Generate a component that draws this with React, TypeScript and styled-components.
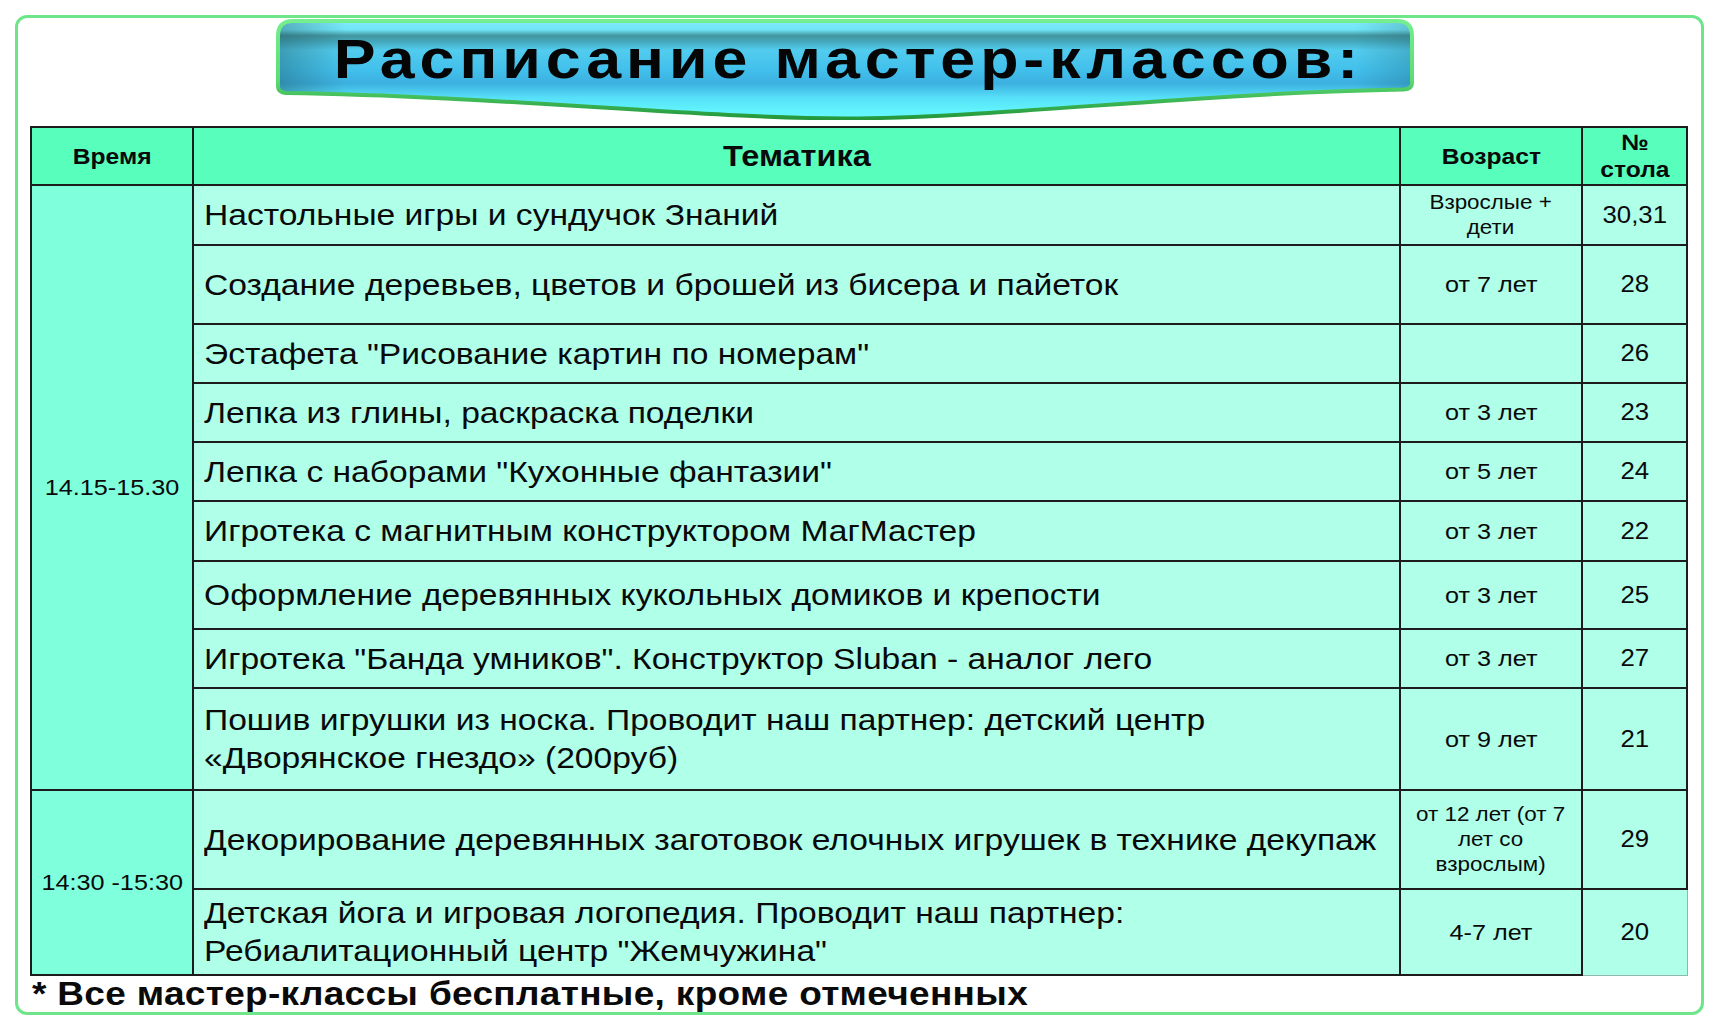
import { Fragment } from "react";
import type { ReactNode } from "react";
import styled, { createGlobalStyle } from "styled-components";

const GlobalStyle = createGlobalStyle`
  html, body {
    margin: 0;
    padding: 0;
    background: #ffffff;
  }
  body {
    font-family: "Liberation Sans", Arial, sans-serif;
    color: #0a0a0a;
  }
`;

// the source picture is stretched sideways, text is widened to match
const Stretch = styled.span<{ $origin?: string }>`
  display: inline-block;
  transform: scaleX(1.12);
  transform-origin: ${p => p.$origin || "center"};
`;

const Page = styled.div`
  padding: 15px 0 0 15px;
`;

const Frame = styled.div`
  box-sizing: border-box;
  width: 1689px;
  height: 1000px;
  border: 3px solid #6fe58b;
  border-radius: 12px;
  padding: 1px 15px 0 12px;
  display: flex;
  flex-direction: column;
`;

const Banner = styled.div`
  position: relative;
  width: 1138px;
  height: 101px;
  margin-left: 246px;
  display: flex;
  justify-content: center;
`;

const BannerShape = styled.svg`
  position: absolute;
  left: 0;
  top: 0;
`;

const Title = styled.h1`
  position: relative;
  margin: 0 0 0 6px;
  padding-top: 12px;
  font-size: 56px;
  line-height: 56px;
  font-weight: 700;
  letter-spacing: 4.4px;
  color: #050505;
`;

const Table = styled.table`
  width: 1656px;
  margin-top: 7px;
  border-collapse: collapse;
  table-layout: fixed;
`;

const Row = styled.tr<{ $h: number }>`
  height: ${p => p.$h}px;
`;

const HeadCell = styled.th<{ $size: number }>`
  background: #58ffbc;
  border: 2px solid #1c1c1c;
  padding: 0;
  font-size: ${p => p.$size}px;
  font-weight: 700;
  line-height: 27px;
  text-align: center;
  vertical-align: middle;
`;

const TimeCell = styled.td`
  background: #80ffdc;
  border: 2px solid #1c1c1c;
  padding: 0;
  font-size: 22.5px;
  text-align: center;
  vertical-align: middle;
`;

const TopicCell = styled.td`
  background: #b0ffe9;
  border: 2px solid #1c1c1c;
  padding: 0 10px;
  font-size: 30px;
  line-height: 38px;
  text-align: left;
  vertical-align: middle;
  white-space: nowrap;
`;

const AgeCell = styled.td<{ $small?: boolean }>`
  background: #b0ffe9;
  border: 2px solid #1c1c1c;
  padding: 0;
  font-size: ${p => (p.$small ? 20 : 22.5)}px;
  line-height: 25px;
  text-align: center;
  vertical-align: middle;
`;

const NumCell = styled.td<{ $open?: boolean }>`
  background: #b0ffe9;
  border: 2px solid #1c1c1c;
  ${p => p.$open && "border-right: 1px solid #8fb8ad; border-bottom: 1px solid #8fb8ad;"}
  padding: 0;
  font-size: 23px;
  text-align: center;
  vertical-align: middle;
`;

const Note = styled.div`
  margin-left: 2px;
  font-size: 33px;
  line-height: 36px;
  font-weight: 700;
  letter-spacing: 0.3px;
  white-space: nowrap;
`;

type Item = {
  h: number;
  topic: ReactNode;
  age: ReactNode;
  small?: boolean;
  num: string;
};

const first: Item[] = [
  { h: 60, topic: "Настольные игры и сундучок Знаний", age: <>Взрослые +<br />дети</>, small: true, num: "30,31" },
  { h: 79, topic: "Создание деревьев, цветов и брошей из бисера и пайеток", age: "от 7 лет", num: "28" },
  { h: 59, topic: "Эстафета \"Рисование картин по номерам\"", age: "", num: "26" },
  { h: 59, topic: "Лепка из глины, раскраска поделки", age: "от 3 лет", num: "23" },
  { h: 59, topic: "Лепка с наборами \"Кухонные фантазии\"", age: "от 5 лет", num: "24" },
  { h: 60, topic: "Игротека с магнитным конструктором МагМастер", age: "от 3 лет", num: "22" },
  { h: 68, topic: "Оформление деревянных кукольных домиков и крепости", age: "от 3 лет", num: "25" },
  { h: 59, topic: "Игротека \"Банда умников\". Конструктор Sluban - аналог лего", age: "от 3 лет", num: "27" },
  {
    h: 102,
    topic: <>Пошив игрушки из носка. Проводит наш партнер: детский центр<br />«Дворянское гнездо» (200руб)</>,
    age: "от 9 лет",
    num: "21",
  },
];

const second: Item[] = [
  {
    h: 99,
    topic: "Декорирование деревянных заготовок елочных игрушек в технике декупаж",
    age: <>от 12 лет (от 7<br />лет со<br />взрослым)</>,
    small: true,
    num: "29",
  },
  {
    h: 86,
    topic: <>Детская йога и игровая логопедия. Проводит наш партнер:<br />Ребиалитационный центр "Жемчужина"</>,
    age: "4-7 лет",
    num: "20",
  },
];

const groups = [
  { time: "14.15-15.30", items: first },
  { time: "14:30 -15:30", items: second },
];

function TitleBanner() {
  const shape =
    "M 2 17 Q 2 2 17 2 H 1121 Q 1136 2 1136 17 V 64 Q 1136 70 1128 70.5 C 920 74 720 99 569 99.5 C 420 99 220 77 10 74 Q 2 73.5 2 67 Z";
  return (
    <Banner>
      <BannerShape width="1138" height="101" viewBox="0 0 1138 101">
        <defs>
          <linearGradient id="tube" x1="0" y1="0" x2="0" y2="1">
            <stop offset="0" stopColor="#80ecfa" />
            <stop offset="0.09" stopColor="#70e4f7" />
            <stop offset="0.15" stopColor="#43959f" />
            <stop offset="0.21" stopColor="#44a8bc" />
            <stop offset="0.3" stopColor="#52ccee" />
            <stop offset="0.5" stopColor="#42c0ec" />
            <stop offset="0.64" stopColor="#3cb0e0" />
            <stop offset="0.78" stopColor="#56def8" />
            <stop offset="0.92" stopColor="#62f4fd" />
            <stop offset="1" stopColor="#66f8ff" />
          </linearGradient>
          <linearGradient id="ends" x1="0" y1="0" x2="1" y2="0">
            <stop offset="0" stopColor="#1d5560" stopOpacity="0.4" />
            <stop offset="0.06" stopColor="#1d5560" stopOpacity="0" />
            <stop offset="0.95" stopColor="#1d5560" stopOpacity="0" />
            <stop offset="1" stopColor="#1d5560" stopOpacity="0.25" />
          </linearGradient>
          <linearGradient id="rim" x1="0" y1="0" x2="0" y2="1">
            <stop offset="0" stopColor="#74ee8e" />
            <stop offset="0.6" stopColor="#5edc74" />
            <stop offset="1" stopColor="#23983c" />
          </linearGradient>
        </defs>
        <path d={shape} fill="url(#tube)" />
        <path d={shape} fill="url(#ends)" />
        <path d={shape} fill="none" stroke="url(#rim)" strokeWidth="4" />
      </BannerShape>
      <Title>
        <Stretch>Расписание мастер-классов:</Stretch>
      </Title>
    </Banner>
  );
}

export default function App() {
  return (
    <>
      <GlobalStyle />
      <Page>
        <Frame>
          <TitleBanner />
          <Table>
            <colgroup>
              <col style={{ width: 162 }} />
              <col style={{ width: 1207 }} />
              <col style={{ width: 182 }} />
              <col style={{ width: 105 }} />
            </colgroup>
            <thead>
              <Row $h={58}>
                <HeadCell $size={22}><Stretch>Время</Stretch></HeadCell>
                <HeadCell $size={29}><Stretch>Тематика</Stretch></HeadCell>
                <HeadCell $size={22}><Stretch>Возраст</Stretch></HeadCell>
                <HeadCell $size={22}><Stretch>№<br />стола</Stretch></HeadCell>
              </Row>
            </thead>
            <tbody>
              {groups.map((g, gi) => (
                <Fragment key={g.time}>
                  {g.items.map((it, i) => (
                    <Row $h={it.h} key={it.num}>
                      {i === 0 && (
                        <TimeCell rowSpan={g.items.length}>
                          <Stretch>{g.time}</Stretch>
                        </TimeCell>
                      )}
                      <TopicCell>
                        <Stretch $origin="left">{it.topic}</Stretch>
                      </TopicCell>
                      <AgeCell $small={it.small}>
                        <Stretch>{it.age}</Stretch>
                      </AgeCell>
                      <NumCell $open={gi === groups.length - 1 && i === g.items.length - 1}>
                        <Stretch>{it.num}</Stretch>
                      </NumCell>
                    </Row>
                  ))}
                </Fragment>
              ))}
            </tbody>
          </Table>
          <Note>
            <Stretch $origin="left">* Все мастер-классы бесплатные, кроме отмеченных</Stretch>
          </Note>
        </Frame>
      </Page>
    </>
  );
}
